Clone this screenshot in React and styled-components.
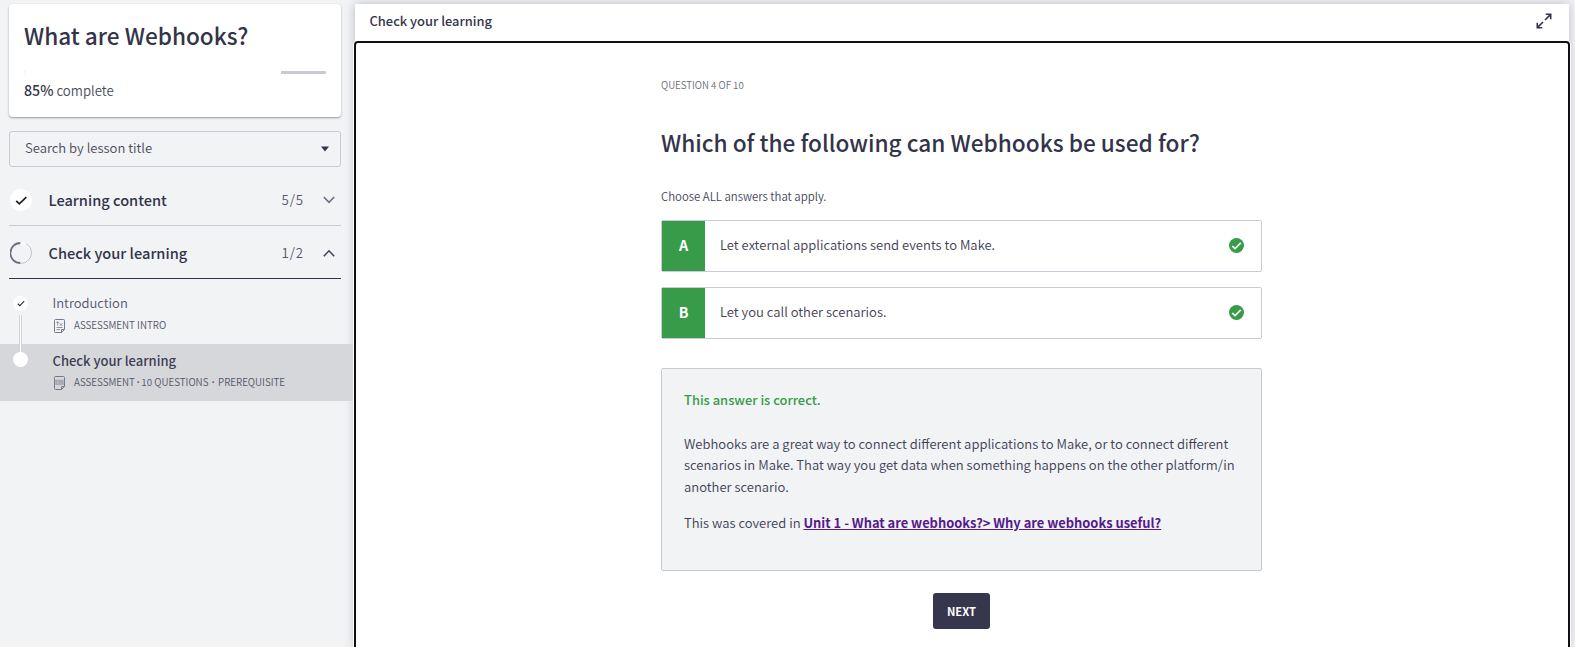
import React from "react";
import styled, { createGlobalStyle } from "styled-components";

const Global = createGlobalStyle`
  *, *::before, *::after { box-sizing: border-box; }
  body { margin: 0; background: #f1f3f5; color: #33344a; overflow: hidden; }
  body, button { font-family: "Noto Sans CJK SC", "Noto Sans", sans-serif; }
  body { font-weight: 350; }
  h1, h2, p { margin: 0; }
`;

const Shell = styled.div`
  display: flex;
  height: 647px;
  overflow: hidden;
`;

/* Sidebar */
const Sidebar = styled.aside`
  width: 355px;
  flex: none;
  padding-top: 4px;
`;

const CourseCard = styled.section`
  height: 113px;
  margin: 0 14px 14px 9px;
  padding: 16px 15px 0;
  background: #fff;
  border-radius: 4px;
  box-shadow: 0 1px 2px rgba(40, 50, 60, 0.45);
`;

const CourseTitle = styled.h1`
  font-size: 22.6px;
  line-height: 32px;
  font-weight: 500;
  white-space: nowrap;
`;

const Progress = styled.div`
  display: flex;
  justify-content: flex-end;
  height: 3px;
  margin-top: 19px;
  border-left: 1px dotted #ececf0;
`;

const Remaining = styled.span`
  width: 15%;
  background: #cacad5;
  border-radius: 0 1px 1px 0;
`;

const Complete = styled.p`
  margin-top: 6px;
  font-size: 13.2px;
  line-height: 20px;
  color: #4b4c5c;
  b { font-size: 14.2px; font-weight: 500; color: #33344a; }
`;

const Search = styled.div`
  display: flex;
  align-items: center;
  justify-content: space-between;
  height: 36px;
  margin: 0 14px 8px 9px;
  padding: 0 11px 0 15px;
  border: 1px solid #c9cad6;
  border-radius: 3px;
  font-size: 13.05px;
  line-height: 20px;
  color: #4b4c5c;
  span { padding-bottom: 2px; }
`;

const Chapter = styled.div`
  display: flex;
  align-items: center;
  height: ${(p) => (p.$open ? 53 : 51)}px;
  margin: 0 14px 0 9px;
  padding: ${(p) => (p.$open ? "1px 6px 0 1px" : "0 6px 0 1px")};
  border-bottom: ${(p) => (p.$open ? "1px solid #33344a" : "1px solid #c9cad6")};
  svg { flex: none; }
`;

const ChapterName = styled.span`
  flex: 1;
  margin-left: 16.5px;
  font-size: 14.6px;
  line-height: 24px;
  font-weight: 500;
`;

const Count = styled.span`
  width: 41.5px;
  font-size: 13.3px;
  line-height: 24px;
  letter-spacing: 0.9px;
  color: #55566b;
`;

const Lesson = styled.div`
  display: flex;
  position: relative;
  height: ${(p) => (p.$active ? 57 : 65)}px;
  width: 353px;
  padding: ${(p) => (p.$active ? "7px 0 0 13px" : "14px 0 0 13px")};
  background: ${(p) => (p.$active ? "#d6d7da" : "transparent")};
`;

const Dot = styled.span`
  display: flex;
  align-items: center;
  justify-content: center;
  flex: none;
  width: 15px;
  height: 15px;
  margin-top: ${(p) => (p.$active ? 1 : 3)}px;
  border-radius: 50%;
  background: #fff;
`;

const Connector = styled.span`
  position: absolute;
  z-index: 1;
  left: 19px;
  top: 36px;
  width: 3px;
  height: 37px;
  background: #fff;
  border: solid #d2d3d8;
  border-width: 0 1px;
`;

const LessonBody = styled.div`
  margin-left: 24.5px;
`;

const LessonName = styled.div`
  font-size: 13px;
  line-height: 20px;
  font-weight: ${(p) => (p.$active ? 500 : 350)};
  color: ${(p) => (p.$active ? "#3d3e55" : "#55566b")};
`;

const Meta = styled.div`
  display: flex;
  align-items: center;
  gap: 9.5px;
  height: 16px;
  margin-top: ${(p) => (p.$active ? 3.5 : 4.5)}px;
  padding-left: 1px;
  font-size: 9.8px;
  line-height: 16px;
  color: #55566b;
  white-space: nowrap;
  span { padding-bottom: 1px; }
`;

const Separator = styled.i`
  margin: 0 ${(p) => p.$gap}px;
  font-family: "Noto Sans", sans-serif;
  font-style: normal;
  font-weight: 700;
`;

/* Player */
const Player = styled.main`
  display: flex;
  flex-direction: column;
  flex: 1;
  margin: 4px 6px 0 0;
  background: #fff;
  box-shadow: 0 0 10px rgba(60, 65, 80, 0.3);
`;

const TopBar = styled.header`
  display: flex;
  align-items: center;
  justify-content: space-between;
  height: 37px;
  padding: 0 17px 3px 14.5px;
  font-size: 12.9px;
  line-height: 20px;
  font-weight: 500;
`;

const Frame = styled.div`
  flex: 1;
  margin: 0 -1px -4px;
  padding: 33px 0 0 305px;
  border: 2px solid #101014;
  border-radius: 4px;
  background: #fff;
  box-shadow: 0 0 0 1px #fff;
`;

const Quiz = styled.div`
  width: 601px;
`;

const Step = styled.p`
  font-size: 9.7px;
  line-height: 18px;
  color: #6c6d77;
`;

const Question = styled.h2`
  margin-top: 31px;
  font-size: 22.65px;
  line-height: 36px;
  font-weight: 500;
  white-space: nowrap;
`;

const Hint = styled.p`
  margin: 25px 0 14px;
  font-size: 11.4px;
  line-height: 20px;
  color: #44455a;
`;

const Answer = styled.div`
  display: flex;
  align-items: center;
  height: 52px;
  margin-bottom: 15px;
  padding-right: 17px;
  border: 1px solid #c9cad6;
  border-radius: 2px;
  font-size: 13.04px;
  line-height: 20px;
  color: #3f4055;
  svg { margin-bottom: 1px; }
`;

const Letter = styled.span`
  display: flex;
  align-items: center;
  justify-content: center;
  align-self: stretch;
  width: 43px;
  margin-right: 15px;
  padding-bottom: 2px;
  background: #379b4a;
  color: #fff;
  font-size: 14.3px;
  font-weight: 700;
`;

const AnswerText = styled.span`
  flex: 1;
  padding-bottom: 2px;
`;

const Feedback = styled.section`
  height: 203px;
  margin-top: 29px;
  padding: 20px 22px;
  border: 1px solid #c9cad0;
  border-radius: 2px;
  background: #f1f3f5;
  font-size: 13.04px;
  line-height: 21.6px;
  color: #3f4055;
  white-space: nowrap;
`;

const Verdict = styled.p`
  margin-bottom: 22px;
  font-size: 12.9px;
  color: #379b4a;
  font-weight: 500;
`;

const Covered = styled.p`
  margin-top: 14.4px;
`;

const UnitLink = styled.a`
  color: #551a8b;
  font-size: 12.9px;
  font-weight: 700;
  text-decoration: underline;
`;

const Next = styled.button`
  display: block;
  width: 57px;
  height: 36px;
  margin: 22px auto 0;
  padding: 0;
  border: 0;
  border-radius: 3px;
  background: #36374d;
  color: #fff;
  font-size: 11.2px;
  line-height: 20px;
  font-weight: 700;
`;

const Caret = () => (
  <svg width="8" height="6" viewBox="0 0 8 6"><path d="M0 .5h8L4 5.6z" fill="#33344a" /></svg>
);

const Chevron = ({ up }) => (
  <svg width="12" height="8" viewBox="0 0 12 8" fill="none" stroke={up ? "#44455a" : "#6c6d80"} strokeWidth="1.6">
    <path d={up ? "M.8 7.2 6 1.8 11.2 7.2" : "M.8 1 6 6.4 11.2 1"} />
  </svg>
);

const DoneBadge = () => (
  <svg width="22" height="22" viewBox="0 0 22 22">
    <circle cx="11" cy="11" r="11" fill="#fff" />
    <path d="m6.2 11.8 3.1 3 7-6.6" fill="none" stroke="#222" strokeWidth="1.8" />
  </svg>
);

const PartialBadge = () => (
  <svg width="22" height="22" viewBox="0 0 22 22" fill="none">
    <circle cx="11" cy="11" r="10" stroke="#fff" strokeWidth="1.6" />
    <path d="M11 .6a10.4 10.4 0 0 1 0 20.8" stroke="#aaaab8" strokeWidth=".8" strokeDasharray="0 5 30" />
    <path d="M10.4 21a10 10 0 0 1 0-20" stroke="#6c6d80" strokeWidth="1.8" />
  </svg>
);

const DocIcon = ({ quiz }) => (
  <svg width="11" height="14" viewBox="0 0 11 14" fill="none" stroke="#77788a" strokeWidth="1">
    <path d="M7.5 13.5h-6a1 1 0 0 1-1-1v-11a1 1 0 0 1 1-1h8a1 1 0 0 1 1 1v9zM7.5 13.5v-3h3" />
    {quiz ? (
      <g strokeWidth=".7" stroke="#858698">
        <rect x="1" y="4.3" width="9" height="4" rx="1" />
        <path d="M3.9 5.3H2.4v2h1.5M4.8 5.3h1.3v2H4.8zM7.2 5.3h1.3v2H7.2z" />
      </g>
    ) : (
      <path d="M2.2 3.2h3M3.7 3.2v3.4M5.8 4.4l2.4 2.4M8.2 4.4 5.8 6.8M2.5 8.5h6M2.5 10.6h3.6" strokeWidth=".8" />
    )}
  </svg>
);

const ExpandIcon = () => (
  <svg width="16" height="16" viewBox="0 0 16 16" fill="none" stroke="#33344a" strokeWidth="1.6">
    <path d="M9.8 1.3h4.9v4.9M14.4 1.6 9 7M6.2 14.7H1.3V9.8M1.6 14.4 7 9" />
  </svg>
);

const CorrectIcon = () => (
  <svg width="15" height="15" viewBox="0 0 15 15">
    <circle cx="7.5" cy="7.5" r="7.5" fill="#379b4a" />
    <path d="m3.2 8 2.8 2.7 5.8-5.8" fill="none" stroke="#fff" strokeWidth="1.6" />
  </svg>
);

const answers = [
  ["A", "Let external applications send events to Make."],
  ["B", "Let you call other scenarios."],
];

export default function App() {
  return (
    <Shell>
      <Global />
      <Sidebar>
        <CourseCard>
          <CourseTitle>What are Webhooks?</CourseTitle>
          <Progress><Remaining /></Progress>
          <Complete><b>85%</b> complete</Complete>
        </CourseCard>
        <Search><span>Search by lesson title</span><Caret /></Search>
        <Chapter>
          <DoneBadge />
          <ChapterName>Learning content</ChapterName>
          <Count>5/5</Count>
          <Chevron />
        </Chapter>
        <Chapter $open>
          <PartialBadge />
          <ChapterName>Check your learning</ChapterName>
          <Count>1/2</Count>
          <Chevron up />
        </Chapter>
        <Lesson>
          <Dot>
            <svg width="8" height="7" viewBox="0 0 8 7" fill="none" stroke="#333" strokeWidth="1.2"><path d="m.8 3.8 2 1.9L7.2 1.2" /></svg>
          </Dot>
          <Connector />
          <LessonBody>
            <LessonName>Introduction</LessonName>
            <Meta><DocIcon /><span>ASSESSMENT INTRO</span></Meta>
          </LessonBody>
        </Lesson>
        <Lesson $active>
          <Dot $active />
          <LessonBody>
            <LessonName $active>Check your learning</LessonName>
            <Meta $active>
              <DocIcon quiz />
              <span>
                ASSESSMENT<Separator $gap={1.8}>·</Separator>10 QUESTIONS<Separator $gap={3.4}>·</Separator>PREREQUISITE
              </span>
            </Meta>
          </LessonBody>
        </Lesson>
      </Sidebar>
      <Player>
        <TopBar>Check your learning<ExpandIcon /></TopBar>
        <Frame>
          <Quiz>
            <Step>QUESTION 4 OF 10</Step>
            <Question>Which of the following can Webhooks be used for?</Question>
            <Hint>Choose ALL answers that apply.</Hint>
            {answers.map(([letter, text]) => (
              <Answer key={letter}>
                <Letter>{letter}</Letter>
                <AnswerText>{text}</AnswerText>
                <CorrectIcon />
              </Answer>
            ))}
            <Feedback>
              <Verdict>This answer is correct.</Verdict>
              <p>
                Webhooks are a great way to connect different applications to Make, or to connect different<br />
                scenarios in Make. That way you get data when something happens on the other platform/in<br />
                another scenario.
              </p>
              <Covered>
                This was covered in <UnitLink>Unit 1 - What are webhooks?&gt; Why are webhooks useful?</UnitLink>
              </Covered>
            </Feedback>
            <Next>NEXT</Next>
          </Quiz>
        </Frame>
      </Player>
    </Shell>
  );
}
